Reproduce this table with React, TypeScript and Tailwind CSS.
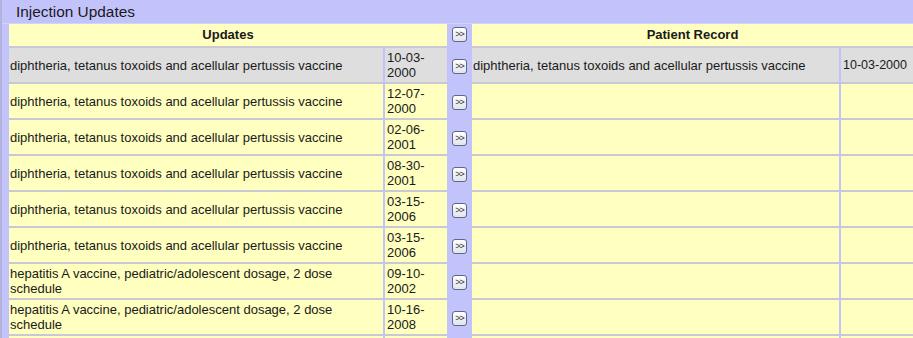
import React from "react";

type Row = { name: string; date: string; gray?: boolean; pname?: string; pdate?: string };

const DTP = "diphtheria, tetanus toxoids and acellular pertussis vaccine";
const HEPA = "hepatitis A vaccine, pediatric/adolescent dosage, 2 dose schedule";

const rows: Row[] = [
  { name: DTP, date: "10-03-2000", gray: true, pname: DTP, pdate: "10-03-2000" },
  { name: DTP, date: "12-07-2000" },
  { name: DTP, date: "02-06-2001" },
  { name: DTP, date: "08-30-2001" },
  { name: DTP, date: "03-15-2006" },
  { name: DTP, date: "03-15-2006" },
  { name: HEPA, date: "09-10-2002" },
  { name: HEPA, date: "10-16-2008" },
  { name: "", date: "" },
];

function MoveButton() {
  return (
    <button className="flex h-[15px] w-[15px] items-center justify-center rounded-[3px] border border-[#5b6a86] bg-gradient-to-b from-[#ffffff] to-[#e2e4ee] p-0 text-[9px] leading-none text-[#333]">
      <span className="-mt-[1px] tracking-[-1px]">&gt;&gt;</span>
    </button>
  );
}

export default function App() {
  return (
    <div
      className="h-[338px] w-[913px] overflow-hidden border-l-2 border-[#b2b2dc] bg-[#c3c3fb] text-[#1a1a1a]"
      style={{ fontFamily: '"Liberation Sans", Arial, sans-serif' }}
    >
      <div className="h-[24px] border-b border-[#d2d2fc] pl-[14px] pt-[3px] text-[15.4px] leading-[18px]">
        Injection Updates
      </div>
      <div className="pl-[7px]">
        {/* header */}
        <div className="flex h-[24px]">
          <div className="flex h-[24px] w-[438px] items-center justify-center border-b-2 border-[#c9c9d6] bg-[#ffffbf] text-[13px] font-bold">
            Updates
          </div>
          <div className="flex h-[24px] w-[25px] items-start justify-center pt-[3px]">
            <MoveButton />
          </div>
          <div className="flex h-[24px] flex-1 items-center justify-center border-b-2 border-[#c9c9d6] bg-[#ffffbf] text-[13px] font-bold">
            Patient Record
          </div>
        </div>
        {rows.map((r, i) => {
          const bg = r.gray ? "bg-[#dedede]" : "bg-[#ffffbf]";
          const cell = `flex h-[36px] items-center border-b-2 border-[#c9c9d6] ${bg}`;
          return (
            <div key={i} className="flex h-[36px] text-[13px] leading-[15px]">
              <div className={`${cell} w-[374px] pl-[1px]`}>
                <span>{r.name}</span>
              </div>
              <div className="w-[2px]" />
              <div className={`${cell} w-[62px] pl-[2px]`}>
                <span>
                  {r.date.slice(0, 6)}
                  <br />
                  {r.date.slice(6)}
                </span>
              </div>
              <div className="flex h-[36px] w-[25px] items-center justify-center pt-[1px]">
                {r.date ? <MoveButton /> : null}
              </div>
              <div className={`${cell} w-[367px] pl-[1px]`}>
                <span className="whitespace-nowrap">{r.pname ?? ""}</span>
              </div>
              <div className="w-[2px]" />
              <div className={`${cell} flex-1 pl-[2px]`}>
                <span className="whitespace-nowrap text-[12.5px]">{r.pdate ?? ""}</span>
              </div>
            </div>
          );
        })}
      </div>
    </div>
  );
}
